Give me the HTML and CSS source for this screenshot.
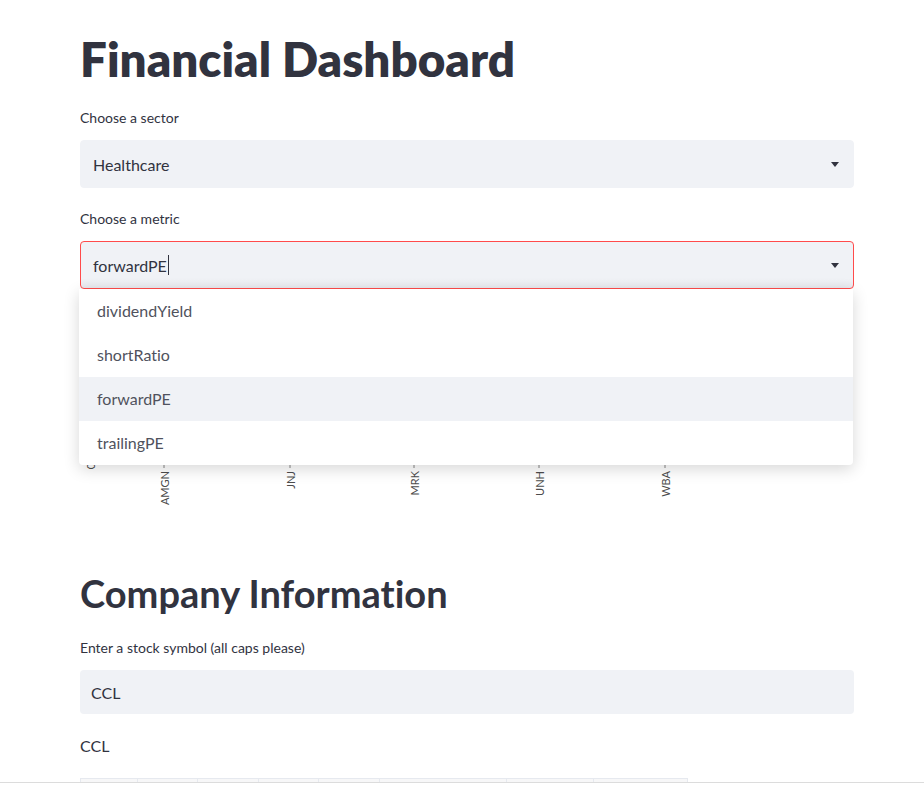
FILE: index.html
```html
<!DOCTYPE html>
<html lang="en">
<head>
<meta charset="utf-8">
<title>Financial Dashboard</title>
<link rel="stylesheet" href="styles.css">
</head>
<body>
<div class="app">
  <main class="main">
    <h1 class="title">Financial Dashboard</h1>

    <div class="field">
      <label class="label">Choose a sector</label>
      <div class="select">
        <span class="select-value">Healthcare</span>
        <span class="caret"></span>
      </div>
    </div>

    <div class="field field-metric">
      <label class="label">Choose a metric</label>
      <div class="select select-focus">
        <span class="select-value">forwardPE<span class="cursor"></span></span>
        <span class="caret"></span>
      </div>
      <div class="chart">
        <svg class="chart-svg" width="774" height="222" viewBox="0 0 774 222">
          <g class="axis">
            <text class="tick-label" transform="translate(10 177) rotate(-90)" text-anchor="middle">0</text>
            <line x1="84" y1="174" x2="84" y2="179"></line>
            <text class="tick-label" transform="translate(84 182) rotate(-90)" text-anchor="end">AMGN</text>
            <line x1="210" y1="174" x2="210" y2="179"></line>
            <text class="tick-label" transform="translate(210 182) rotate(-90)" text-anchor="end">JNJ</text>
            <line x1="334" y1="174" x2="334" y2="179"></line>
            <text class="tick-label" transform="translate(334 182) rotate(-90)" text-anchor="end">MRK</text>
            <line x1="459" y1="174" x2="459" y2="179"></line>
            <text class="tick-label" transform="translate(459 182) rotate(-90)" text-anchor="end">UNH</text>
            <line x1="585" y1="174" x2="585" y2="179"></line>
            <text class="tick-label" transform="translate(585 182) rotate(-90)" text-anchor="end">WBA</text>
          </g>
        </svg>
        <ul class="menu">
          <li class="menu-item">dividendYield</li>
          <li class="menu-item">shortRatio</li>
          <li class="menu-item menu-item-active">forwardPE</li>
          <li class="menu-item">trailingPE</li>
        </ul>
      </div>
    </div>

    <h2 class="subtitle">Company Information</h2>

    <div class="field">
      <label class="label">Enter a stock symbol (all caps please)</label>
      <div class="input">CCL</div>
    </div>

    <p class="text">CCL</p>

    <div class="table">
      <div class="cell c1"></div>
      <div class="cell c2"></div>
      <div class="cell c3"></div>
      <div class="cell c4"></div>
      <div class="cell c5"></div>
      <div class="cell c6"></div>
      <div class="cell c7"></div>
      <div class="cell c8"></div>
    </div>
  </main>
</div>
</body>
</html>
```

FILE: styles.css
```css
* { box-sizing: border-box; }

html, body {
  margin: 0;
  padding: 0;
  background: #ffffff;
  overflow: hidden;
}

body {
  font-family: "Lato", "Noto Sans", sans-serif;
  font-variant-ligatures: none;
  color: #31333f;
}

.app {
  height: 783px;
  overflow: hidden;
  border-bottom: 1px solid #dcdcdc;
}

.main {
  width: 774px;
  margin-left: 80px;
  padding-top: 30px;
}

.title {
  margin: 0;
  font-size: 47.5px;
  line-height: 58px;
  font-weight: 800;
  color: #31333f;
}

.field {
  display: flex;
  flex-direction: column;
}

.label {
  font-size: 14px;
  line-height: 20px;
  color: #31333f;
}

.title + .field { margin-top: 20px; }
.title + .field .label { margin-bottom: 12px; }

.select {
  height: 48px;
  background: #f0f2f6;
  border: 1px solid #f0f2f6;
  border-radius: 4px;
  display: flex;
  align-items: center;
  justify-content: space-between;
  padding: 0 14px 0 12px;
}

.select-value {
  font-size: 16px;
  color: #31333f;
  display: flex;
  align-items: center;
}

.caret {
  width: 0;
  height: 0;
  border-left: 4px solid transparent;
  border-right: 4px solid transparent;
  border-top: 5px solid #31333f;
}

.field-metric { margin-top: 21px; }
.field-metric .label { margin-bottom: 12px; }

.select-focus {
  border-color: #ff4b4b;
  background: linear-gradient(#f0f2f6 0%, #f0f2f6 80%, #e8e9ee 100%);
}

.cursor {
  display: inline-block;
  width: 1px;
  height: 20px;
  background: #31333f;
  margin-left: 1px;
}

.chart {
  position: relative;
  height: 222px;
}

.chart-svg { display: block; }

.axis line {
  stroke: #888888;
  stroke-width: 1;
}

.tick-label {
  font-family: "Lato", "Noto Sans", sans-serif;
  font-size: 11px;
  fill: #4c4c4c;
  dominant-baseline: central;
}

.menu {
  position: absolute;
  top: 0;
  left: -1px;
  width: 774px;
  margin: 0;
  padding: 0;
  list-style: none;
  background: #ffffff;
  border-radius: 0 0 4px 4px;
  box-shadow: 0 4px 16px rgba(0, 0, 0, 0.16);
}

.menu-item {
  height: 44px;
  line-height: 44px;
  padding-left: 18px;
  font-size: 16px;
  color: #50525d;
}

.menu-item-active { background: #f0f2f6; }

.subtitle {
  margin: 60px 0 0 0;
  font-size: 38px;
  line-height: 44px;
  font-weight: 700;
  color: #31333f;
}

.subtitle + .field { margin-top: 23px; }
.subtitle + .field .label { margin-bottom: 12px; }

.input {
  height: 44px;
  background: #f0f2f6;
  border-radius: 4px;
  display: flex;
  align-items: center;
  padding-left: 11px;
  font-size: 16px;
  color: #31333f;
}

.text {
  margin: 22px 0 0 0;
  font-size: 16px;
  line-height: 20px;
}

.table {
  margin-top: 22px;
  display: flex;
  width: 608px;
  height: 40px;
  border-top: 1px solid #e6e9ef;
  border-left: 1px solid #e6e9ef;
}

.cell {
  height: 40px;
  background: #f7f7f8;
  border-right: 1px solid #e6e9ef;
}

.c1 { width: 57px; }
.c2 { width: 60px; }
.c3 { width: 61px; }
.c4 { width: 60px; }
.c5 { width: 61px; }
.c6 { width: 128px; }
.c7 { width: 87px; }
.c8 { width: 94px; }
```
